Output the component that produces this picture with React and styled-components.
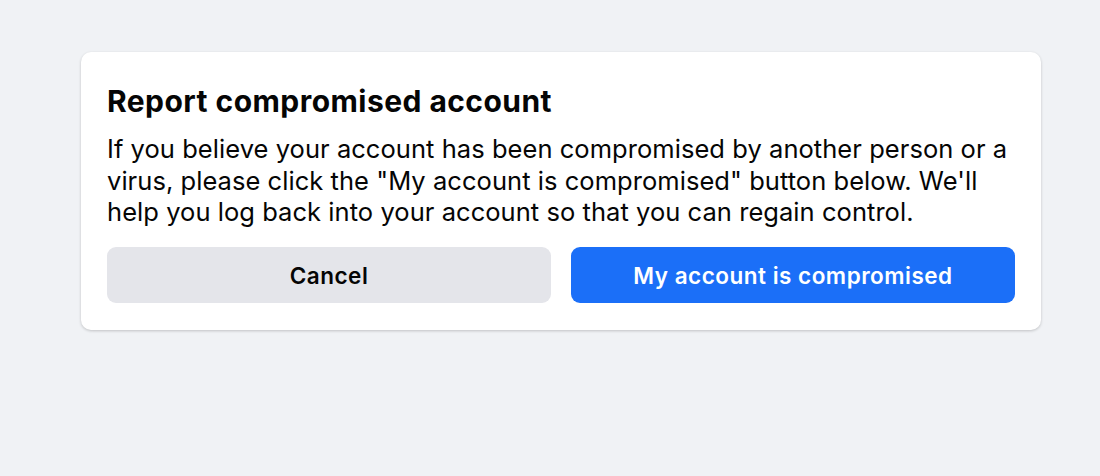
import React from "react";
import styled, { createGlobalStyle } from "styled-components";

const Global = createGlobalStyle`
  html, body { margin: 0; padding: 0; background: #f0f2f5; }
  body { font-family: Inter, "Liberation Sans", Arial, sans-serif; -webkit-font-smoothing: antialiased; }
`;

const Page = styled.div`
  padding: 52px 59px 0 81px;
  min-height: 476px;
  box-sizing: border-box;
`;

const Card = styled.div`
  width: 960px;
  box-sizing: border-box;
  background: #fff;
  border-radius: 10px;
  box-shadow: 0 1px 3px rgba(0, 0, 0, 0.2);
  padding: 31px 26px 27px;
  display: flex;
  flex-direction: column;
`;

const Title = styled.h2`
  margin: 0;
  font-size: 30px;
  line-height: 36px;
  font-weight: 700;
  letter-spacing: 0.45px;
  color: #050505;
`;

const Body = styled.p`
  margin: 14px 0 0;
  font-size: 25.5px;
  line-height: 31.5px;
  letter-spacing: 0.05px;
  color: #050505;
`;

const Actions = styled.div`
  display: grid;
  grid-template-columns: 1fr 1fr;
  gap: 20px;
  margin-top: 19.5px;
`;

const Button = styled.button`
  height: 56px;
  border: none;
  border-radius: 9px;
  font-family: inherit;
  font-size: 22.5px;
  font-weight: 600;
  letter-spacing: 0.5px;
  background: ${(p) => (p.$primary ? "#1b6ff8" : "#e4e5ea")};
  color: ${(p) => (p.$primary ? "#fff" : "#050505")};
  cursor: pointer;
`;

export default function App() {
  return (
    <>
      <Global />
      <Page>
        <Card>
          <Title>Report compromised account</Title>
          <Body>
            If you believe your account has been compromised by another person or a virus, please click the "My account is compromised" button below. We'll help you log back into your account so that you can regain control.
          </Body>
          <Actions>
            <Button>Cancel</Button>
            <Button $primary>My account is compromised</Button>
          </Actions>
        </Card>
      </Page>
    </>
  );
}
